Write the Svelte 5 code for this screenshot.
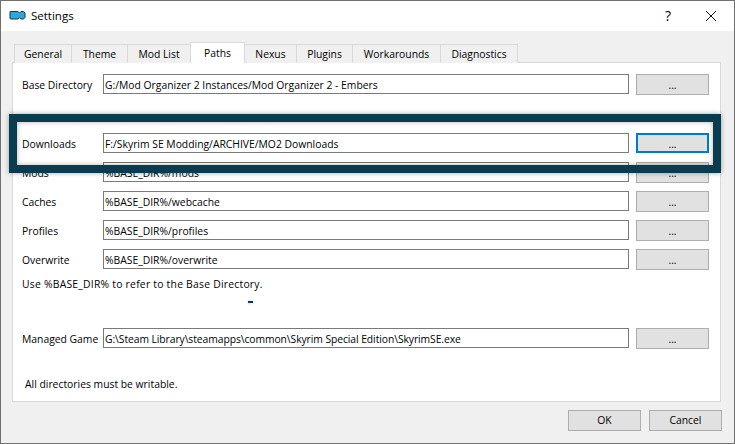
<script lang="ts">
  const tabs = [
    { name: "General", width: 58 },
    { name: "Theme", width: 56 },
    { name: "Mod List", width: 63 },
    { name: "Paths", width: 55 },
    { name: "Nexus", width: 52 },
    { name: "Plugins", width: 56 },
    { name: "Workarounds", width: 88 },
    { name: "Diagnostics", width: 77 },
  ];

  const rows = [
    { label: "Base Directory", value: "G:/Mod Organizer 2 Instances/Mod Organizer 2 - Embers", cls: "first" },
    { label: "Downloads", value: "F:/Skyrim SE Modding/ARCHIVE/MO2 Downloads", focus: true, cls: "second" },
    { label: "Mods", value: "%BASE_DIR%/mods" },
    { label: "Caches", value: "%BASE_DIR%/webcache" },
    { label: "Profiles", value: "%BASE_DIR%/profiles" },
    { label: "Overwrite", value: "%BASE_DIR%/overwrite" },
  ];
</script>

<div class="window">
  <header class="titlebar">
    <svg class="logo" width="17" height="11" viewBox="0 0 17 11">
      <path d="M1.500 1.500h7.500l1.500 1.500 1.500-1.500h2.500l1.500 1.500v4.500l-1.500 1.500h-2.500l-1.500-1.500-1.500 1.500H1.500l-.5-.5v-7z" fill="#2aa9e0" stroke="#1c3440" stroke-width="1" />
    </svg>
    <span class="title">Settings</span>
    <span class="help">?</span>
    <svg class="close" width="10" height="10" viewBox="0 0 10 10">
      <path d="M0 0l10 10M10 0L0 10" stroke="#111" stroke-width="1" fill="none" />
    </svg>
  </header>

  <main class="body">
    <nav class="tabs">
      {#each tabs as tab}
        <div class="tab" class:active={tab.name === "Paths"} style="width: {tab.width}px">{tab.name}</div>
      {/each}
    </nav>

    <section class="pane">
      {#each rows as row}
        <div class="row {row.cls ?? ''}">
          <span class="label">{row.label}</span>
          <div class="input">{row.value}</div>
          <div class="browse" class:focus={row.focus}>...</div>
        </div>
      {/each}
      <p class="hint">Use %BASE_DIR% to refer to the Base Directory.</p>
      <div class="row game">
        <span class="label">Managed Game</span>
        <div class="input">G:\Steam Library\steamapps\common\Skyrim Special Edition\SkyrimSE.exe</div>
        <div class="browse">...</div>
      </div>
      <p class="note">All directories must be writable.</p>
    </section>

    <footer class="actions">
      <div class="btn">OK</div>
      <div class="btn">Cancel</div>
    </footer>
  </main>

  <div class="highlight"></div>
  <div class="dash"></div>
</div>

<style>
  :global(body) {
    margin: 0;
  }

  .window {
    position: relative;
    box-sizing: border-box;
    width: 735px;
    height: 444px;
    border: 1px solid #707070;
    background: #f0f0f0;
    font-family: "Open Sans", "Noto Sans", sans-serif;
    font-size: 10.35px;
    color: #000;
    display: flex;
    flex-direction: column;
    overflow: hidden;
  }

  .titlebar {
    box-sizing: border-box;
    height: 30px;
    flex: none;
    background: #fff;
    display: flex;
    align-items: center;
    padding: 0 0 1px 8px;
  }

  .logo {
    margin-right: 5px;
  }

  .title {
    font-size: 11.5px;
    flex: 1;
  }

  .help {
    font-size: 14px;
    margin-right: 35px;
  }

  .close {
    margin-right: 18px;
  }

  .body {
    flex: 1;
    padding: 11px 0 0 11px;
    display: flex;
    flex-direction: column;
  }

  .tabs {
    display: flex;
    height: 20px;
    padding-left: 2px;
    position: relative;
    z-index: 1;
  }

  .tab {
    box-sizing: border-box;
    height: 19px;
    margin-top: 2px;
    border: 1px solid #d9d9d9;
    border-left-width: 0;
    border-bottom: none;
    background: #f0f0f0;
    text-align: center;
    line-height: 18px;
    white-space: nowrap;
  }

  .tab:first-child {
    border-left-width: 1px;
  }

  .tab.active {
    height: 21px;
    margin-top: 0;
    margin-left: -1px;
    border-left-width: 1px;
    background: #fff;
    line-height: 20px;
  }

  .pane {
    box-sizing: border-box;
    width: 709px;
    height: 340px;
    background: #fff;
    border: 1px solid #d9d9d9;
    padding: 11px 10px 0 9px;
  }

  .row {
    display: grid;
    grid-template-columns: 81px 526px 73px;
    align-items: start;
    height: 21px;
    margin-top: 8px;
  }

  .row.first {
    margin-top: 0;
  }

  .row.second {
    margin-top: 38px;
  }

  .row.game {
    margin-top: 0;
  }

  .label {
    line-height: 23px;
    white-space: nowrap;
  }

  .input {
    box-sizing: border-box;
    height: 20px;
    border: 1px solid #7a7a7a;
    padding-left: 1px;
    line-height: 21px;
    white-space: nowrap;
    overflow: hidden;
    width: 526px;
  }

  .game .input {
    letter-spacing: -0.08px;
  }

  .browse {
    box-sizing: border-box;
    width: 73px;
    height: 21px;
    margin-left: 7px;
    border: 1px solid #adadad;
    background: #e1e1e1;
    text-align: center;
    line-height: 21px;
  }

  .browse.focus {
    height: 20px;
    border: 2px solid #0078d7;
    line-height: 18px;
  }

  .hint {
    height: 16px;
    line-height: 16px;
    margin: 6px 0 36px;
    letter-spacing: 0.24px;
  }

  .note {
    margin: 27px 0 0 3px;
    line-height: 16px;
  }

  .actions {
    display: flex;
    justify-content: flex-end;
    gap: 8px;
    padding: 8px 12px 0 0;
  }

  .btn {
    box-sizing: border-box;
    width: 73px;
    height: 21px;
    border: 1px solid #adadad;
    background: #e1e1e1;
    text-align: center;
    line-height: 18px;
  }

  /* callout drawn over the screenshot */
  .highlight {
    position: absolute;
    left: 8px;
    top: 113px;
    width: 696px;
    height: 43px;
    border: 8px solid #0a3c50;
    box-shadow: 0 0 5px rgba(0, 0, 0, 0.35), inset 0 0 5px rgba(0, 0, 0, 0.3);
  }

  .dash {
    position: absolute;
    left: 247px;
    top: 300px;
    width: 5px;
    height: 2px;
    background: #0a3c50;
    box-shadow: 0 0 3px rgba(0, 0, 0, 0.25);
  }
</style>
